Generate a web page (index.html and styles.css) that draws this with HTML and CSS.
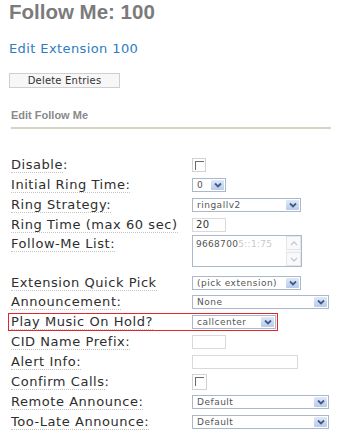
FILE: index.html
```html
<!DOCTYPE html>
<html>
<head>
<meta charset="utf-8">
<link rel="stylesheet" href="styles.css">
</head>
<body>
<div class="page">
  <h1 class="title">Follow Me: 100</h1>
  <h2 class="subtitle">Edit Extension 100</h2>
  <div class="btn">Delete Entries</div>
  <div class="section">Edit Follow Me</div>

  <div class="form">
    <div class="row">
      <div class="lbl"><span>Disable</span>:</div>
      <div class="cb"></div>
    </div>
    <div class="row">
      <div class="lbl"><span>Initial Ring Time:</span></div>
      <div class="sel w34"><span class="val">0</span><span class="arr"><svg width="8" height="6" viewBox="0 0 8 6"><path d="M1 1.5 L4 4.5 L7 1.5" fill="none" stroke="#3f5a8c" stroke-width="1.8"/></svg></span></div>
    </div>
    <div class="row">
      <div class="lbl"><span>Ring Strategy:</span></div>
      <div class="sel w109"><span class="val">ringallv2</span><span class="arr"><svg width="8" height="6" viewBox="0 0 8 6"><path d="M1 1.5 L4 4.5 L7 1.5" fill="none" stroke="#3f5a8c" stroke-width="1.8"/></svg></span></div>
    </div>
    <div class="row">
      <div class="lbl"><span>Ring Time (max 60 sec)</span></div>
      <div class="inp w34">20</div>
    </div>
    <div class="row tall">
      <div class="lbl"><span>Follow-Me List:</span></div>
      <div class="ta">
        <div class="ta-text">9668700<span class="blur">5::1:75</span></div>
        <div class="ta-scroll">
          <span class="sb-btn"><svg width="8" height="5" viewBox="0 0 8 5"><path d="M1 4 L4 1 L7 4" fill="none" stroke="#c3c8d2" stroke-width="1.3"/></svg></span>
          <span class="sb-btn"><svg width="8" height="5" viewBox="0 0 8 5"><path d="M1 1 L4 4 L7 1" fill="none" stroke="#c3c8d2" stroke-width="1.3"/></svg></span>
        </div>
      </div>
    </div>
    <div class="row short">
      <div class="lbl"><span>Extension Quick Pick</span></div>
      <div class="sel w109"><span class="val">(pick extension)</span><span class="arr"><svg width="8" height="6" viewBox="0 0 8 6"><path d="M1 1.5 L4 4.5 L7 1.5" fill="none" stroke="#3f5a8c" stroke-width="1.8"/></svg></span></div>
    </div>
    <div class="row">
      <div class="lbl"><span>Announcement:</span></div>
      <div class="sel w137"><span class="val">None</span><span class="arr"><svg width="8" height="6" viewBox="0 0 8 6"><path d="M1 1.5 L4 4.5 L7 1.5" fill="none" stroke="#3f5a8c" stroke-width="1.8"/></svg></span></div>
    </div>
    <div class="row hl">
      <div class="lbl"><span>Play Music On Hold?</span></div>
      <div class="sel w84"><span class="val">callcenter</span><span class="arr"><svg width="8" height="6" viewBox="0 0 8 6"><path d="M1 1.5 L4 4.5 L7 1.5" fill="none" stroke="#3f5a8c" stroke-width="1.8"/></svg></span></div>
    </div>
    <div class="row">
      <div class="lbl"><span>CID Name Prefix:</span></div>
      <div class="inp w34"></div>
    </div>
    <div class="row">
      <div class="lbl"><span>Alert Info:</span></div>
      <div class="inp w106"></div>
    </div>
    <div class="row">
      <div class="lbl"><span>Confirm Calls</span>:</div>
      <div class="cb big"></div>
    </div>
    <div class="row">
      <div class="lbl"><span>Remote Announce:</span></div>
      <div class="sel w137"><span class="val">Default</span><span class="arr"><svg width="8" height="6" viewBox="0 0 8 6"><path d="M1 1.5 L4 4.5 L7 1.5" fill="none" stroke="#3f5a8c" stroke-width="1.8"/></svg></span></div>
    </div>
    <div class="row">
      <div class="lbl"><span>Too-Late Announce:</span></div>
      <div class="sel w137"><span class="val">Default</span><span class="arr"><svg width="8" height="6" viewBox="0 0 8 6"><path d="M1 1.5 L4 4.5 L7 1.5" fill="none" stroke="#3f5a8c" stroke-width="1.8"/></svg></span></div>
    </div>
  </div>
</div>
</body>
</html>
```
FILE: styles.css
```css
html, body {
  margin: 0;
  padding: 0;
  background: #ffffff;
}

.page {
  padding-left: 9px;
  width: 336px;
  box-sizing: border-box;
}

.title {
  margin: 0;
  font-family: "Liberation Sans", Arial, sans-serif;
  font-weight: bold;
  font-size: 20.5px;
  line-height: 23px;
  color: #7b7b7b;
}

.subtitle {
  margin: 18px 0 0 0;
  font-family: "DejaVu Sans", Verdana, sans-serif;
  font-weight: normal;
  font-size: 13px;
  letter-spacing: 0.4px;
  line-height: 16px;
  color: #2e7cc2;
}

.btn {
  margin-top: 16px;
  width: 111px;
  height: 15px;
  box-sizing: border-box;
  border: 1px solid #cfcfcf;
  background: #f7f7f7;
  font-family: "DejaVu Sans", Verdana, sans-serif;
  font-size: 10px;
  letter-spacing: 0.2px;
  line-height: 13px;
  text-align: center;
  color: #333;
}

.section {
  margin: 21px 5px 0 2px;
  padding-bottom: 5px;
  border-bottom: 2px solid #d6d3c5;
  font-family: "Liberation Sans", Arial, sans-serif;
  font-weight: bold;
  font-size: 11px;
  line-height: 13px;
  color: #8a8a8a;
}

.form {
  margin-top: 26px;
  margin-left: 2px;
}

.row {
  display: flex;
  align-items: center;
  height: 20px;
}

.row.short {
  height: 18px;
}

.row.tall {
  height: 39px;
  align-items: flex-start;
}

.row.tall .lbl {
  padding-top: 1px;
}

.row.hl {
  margin-left: -3px;
  padding-left: 2px;
  width: 270px;
  height: 18px;
  margin-top: 1px;
  margin-bottom: 1px;
  box-sizing: border-box;
  border: 1px solid #e3262b;
}

.lbl {
  width: 181px;
  flex: none;
  font-family: "DejaVu Sans", Verdana, sans-serif;
  font-size: 13px;
  letter-spacing: 0.55px;
  line-height: 16px;
  color: #2e2e2e;
  white-space: nowrap;
}

.lbl span {
  border-bottom: 1px dotted #c4c4c4;
}

.cb {
  width: 14px;
  height: 14px;
  box-sizing: border-box;
  border: 1px solid #d2d2d2;
  background: #fff;
  position: relative;
}

.cb::before {
  content: "";
  position: absolute;
  left: 2px;
  top: 2px;
  width: 8px;
  height: 8px;
  border-left: 1px solid #6a6a6a;
  border-top: 1px solid #6a6a6a;
}

.cb.big {
  width: 15px;
  height: 16px;
}

.sel {
  display: flex;
  align-items: center;
  justify-content: space-between;
  height: 14px;
  box-sizing: border-box;
  border: 1px solid #a9b8cb;
  background: #fff;
  padding-left: 4px;
  font-family: "DejaVu Sans", Verdana, sans-serif;
  font-size: 9px;
  letter-spacing: 0.5px;
  color: #555;
  line-height: 12px;
}

.sel .val {
  white-space: nowrap;
  overflow: hidden;
}

.sel .arr {
  flex: none;
  width: 13px;
  height: 10px;
  margin-right: 1px;
  background: linear-gradient(#dfe8f7, #b9cbea);
  display: flex;
  align-items: center;
  justify-content: center;
  border-radius: 1px;
}

.w34 { width: 34px; }
.w84 { width: 84px; }
.w106 { width: 106px; }
.w109 { width: 109px; }
.w137 { width: 137px; }

.inp {
  height: 14px;
  box-sizing: border-box;
  border: 1px solid #d9d9d9;
  background: #fff;
  padding-left: 3px;
  font-family: "DejaVu Sans", Verdana, sans-serif;
  font-size: 10px;
  letter-spacing: 0.5px;
  line-height: 12px;
  color: #333;
}

.ta {
  display: flex;
  width: 110px;
  height: 32px;
  box-sizing: border-box;
  border: 1px solid #a9b8cb;
  background: #fff;
}

.ta-text {
  flex: 1;
  padding: 2px 0 0 3px;
  font-family: "DejaVu Sans", Verdana, sans-serif;
  font-size: 9px;
  letter-spacing: 0.3px;
  line-height: 12px;
  color: #555;
  white-space: nowrap;
  overflow: hidden;
}

.ta-text .blur {
  color: #c8c8c8;
}

.ta-scroll {
  width: 15px;
  display: flex;
  flex-direction: column;
  justify-content: space-between;
  background: #f6f6f6;
}

.sb-btn {
  height: 14px;
  display: flex;
  align-items: center;
  justify-content: center;
  border: 1px solid #e4e6ea;
  box-sizing: border-box;
  background: #f9f9fa;
}
```
